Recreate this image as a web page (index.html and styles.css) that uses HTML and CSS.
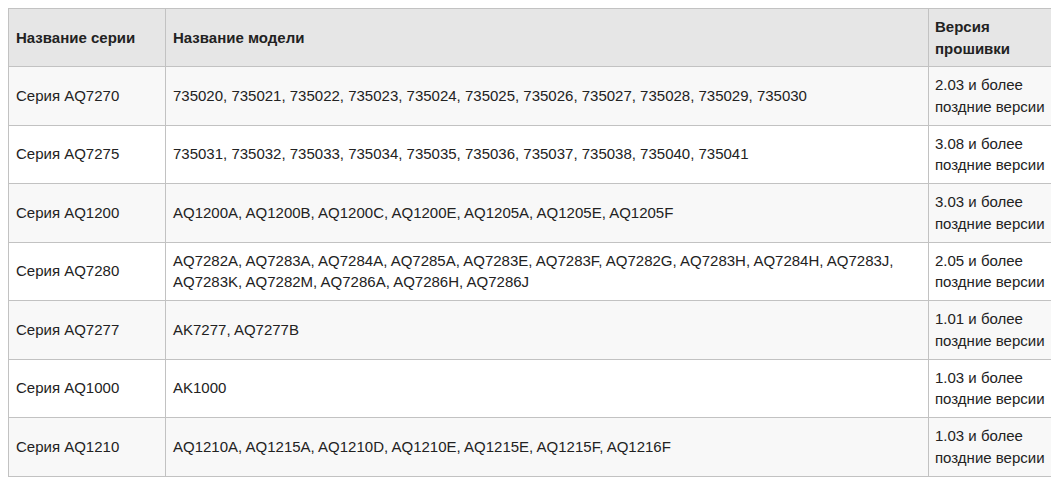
FILE: index.html
```html
<!DOCTYPE html>
<html lang="ru">
<head>
<meta charset="utf-8">
<title>Версии прошивки</title>
<link rel="stylesheet" href="styles.css">
</head>
<body>
<table class="fw-table">
  <colgroup>
    <col class="col-series">
    <col class="col-models">
    <col class="col-version">
  </colgroup>
  <thead>
    <tr>
      <th>Название серии</th>
      <th>Название модели</th>
      <th class="version">Версия прошивки</th>
    </tr>
  </thead>
  <tbody>
    <tr>
      <td>Серия AQ7270</td>
      <td>735020, 735021, 735022, 735023, 735024, 735025, 735026, 735027, 735028, 735029, 735030</td>
      <td class="version">2.03 и более поздние версии</td>
    </tr>
    <tr>
      <td>Серия AQ7275</td>
      <td>735031, 735032, 735033, 735034, 735035, 735036, 735037, 735038, 735040, 735041</td>
      <td class="version">3.08 и более поздние версии</td>
    </tr>
    <tr>
      <td>Серия AQ1200</td>
      <td>AQ1200A, AQ1200B, AQ1200C, AQ1200E, AQ1205A, AQ1205E, AQ1205F</td>
      <td class="version">3.03 и более поздние версии</td>
    </tr>
    <tr>
      <td>Серия AQ7280</td>
      <td>AQ7282A, AQ7283A, AQ7284A, AQ7285A, AQ7283E, AQ7283F, AQ7282G, AQ7283H, AQ7284H, AQ7283J, AQ7283K, AQ7282M, AQ7286A, AQ7286H, AQ7286J</td>
      <td class="version">2.05 и более поздние версии</td>
    </tr>
    <tr>
      <td>Серия AQ7277</td>
      <td>AK7277, AQ7277B</td>
      <td class="version">1.01 и более поздние версии</td>
    </tr>
    <tr>
      <td>Серия AQ1000</td>
      <td>AK1000</td>
      <td class="version">1.03 и более поздние версии</td>
    </tr>
    <tr>
      <td>Серия AQ1210</td>
      <td>AQ1210A, AQ1215A, AQ1210D, AQ1210E, AQ1215E, AQ1215F, AQ1216F</td>
      <td class="version">1.03 и более поздние версии</td>
    </tr>
  </tbody>
</table>
</body>
</html>
```

FILE: styles.css
```css
html, body {
  background: #ffffff;
}

body {
  margin: 8px;
  font-family: "Liberation Sans", Arial, sans-serif;
  font-size: 15px;
  line-height: 21.75px;
  color: #222222;
}

.fw-table {
  width: 1045px;
  table-layout: fixed;
  border-collapse: collapse;
  border: 1px solid #c2c2c2;
}

.col-series {
  width: 157px;
}

.col-version {
  width: 124px;
}

.fw-table th,
.fw-table td {
  border: 1px solid #c2c2c2;
  padding: 7px;
  text-align: left;
  vertical-align: middle;
}

.fw-table .version {
  padding-left: 6px;
  padding-right: 2px;
}

.fw-table th {
  background: #e6e6e6;
  font-weight: bold;
  height: 43px;
  line-height: 21.5px;
}

.fw-table td {
  height: 43.5px;
}

.fw-table tbody tr:nth-child(odd) td {
  background: #f8f8f8;
}

.fw-table tbody tr:nth-child(even) td {
  background: #ffffff;
}
```
